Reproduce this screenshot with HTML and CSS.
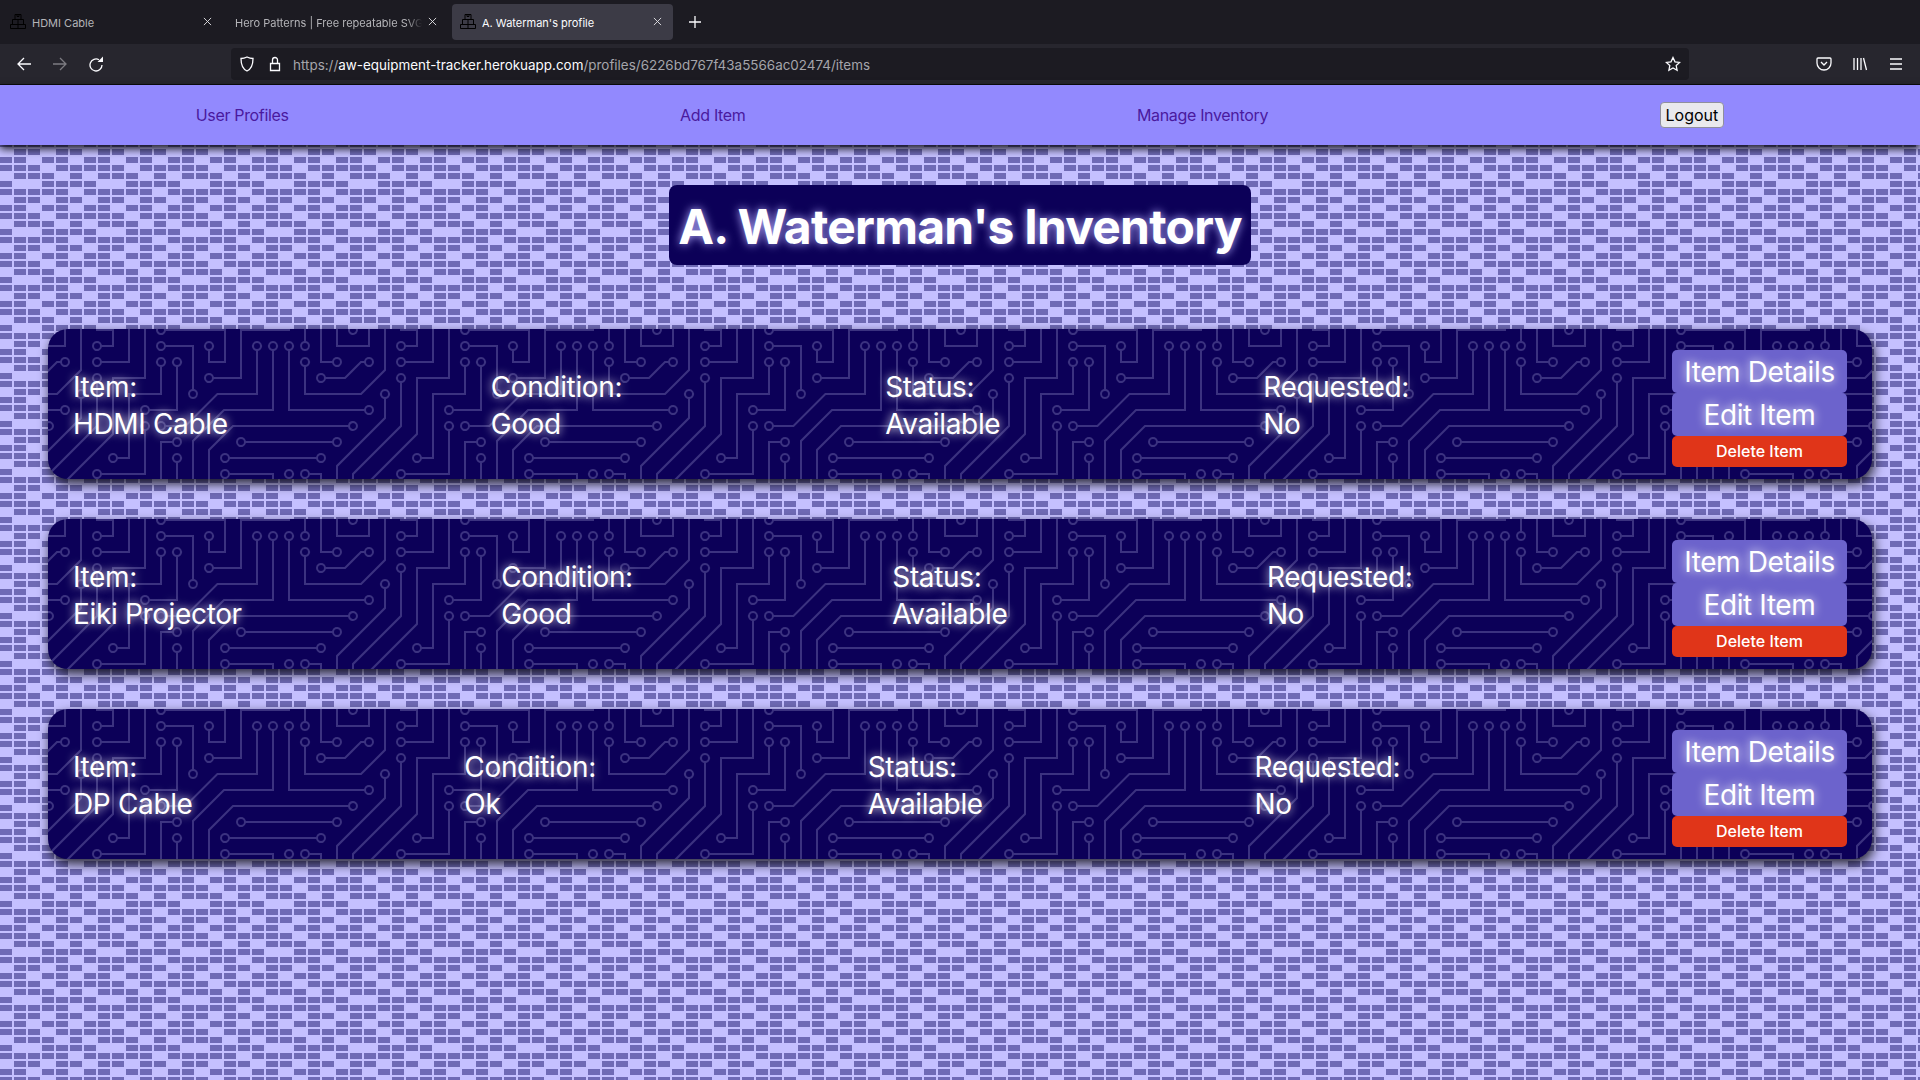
FILE: index.html
```html
<!DOCTYPE html>
<html lang="en">
<head>
    <meta charset="UTF-8">
    <meta name="viewport" content="width=device-width, initial-scale=1.0">
    <title>A. Waterman's profile</title>
    <link rel="stylesheet" href="styles.css">
</head>
<body>
    <!-- browser chrome -->
    <header class="chrome">
        <div class="tabstrip">
            <div class="tab">
                <svg class="favicon" viewBox="0 0 16 16"><path d="M5 .5h6v5H5zM7 .5v2h2v-2M2.500 5.500h11v5h-11zM8 5.500v5M.5 10.500h15v4H.5zM8 10.500v4"/></svg>
                <span class="tab-title">HDMI Cable</span>
                <svg class="tab-close" viewBox="0 0 10 10"><path d="m1 1 8 8M9 1 1 9"/></svg>
            </div>
            <div class="tab">
                <span class="tab-title tab-title-fade">Hero Patterns | Free repeatable SVG</span>
                <svg class="tab-close" viewBox="0 0 10 10"><path d="m1 1 8 8M9 1 1 9"/></svg>
            </div>
            <div class="tab tab-active">
                <svg class="favicon" viewBox="0 0 16 16"><path d="M5 .5h6v5H5zM7 .5v2h2v-2M2.500 5.500h11v5h-11zM8 5.500v5M.5 10.500h15v4H.5zM8 10.500v4"/></svg>
                <span class="tab-title">A. Waterman's profile</span>
                <svg class="tab-close" viewBox="0 0 10 10"><path d="m1 1 8 8M9 1 1 9"/></svg>
            </div>
            <svg class="icon newtab" viewBox="0 0 16 16"><path d="M8 2v12M2 8h12"/></svg>
        </div>
        <div class="toolbar">
            <svg class="icon" viewBox="0 0 16 16"><path d="M15 8H2M8 2 2 8l6 6"/></svg>
            <svg class="icon icon-off" viewBox="0 0 16 16"><path d="M1 8h13M8 2l6 6-6 6"/></svg>
            <svg class="icon" viewBox="0 0 16 16"><path d="M14 9a6 6 0 1 1-3-5.200"/><path class="icon-solid" d="M9.500 6H15V.5z"/></svg>
            <div class="urlbar">
                <svg class="icon" viewBox="0 0 16 16"><path d="M8 1c2 1 4 1.500 6 1.500 0 6-1.500 10.500-6 12.500-4.500-2-6-6.500-6-12.500C4 2.500 6 2 8 1z"/></svg>
                <svg class="icon" viewBox="0 0 16 16"><path d="M3.500 7.500h9v7h-9zM5.500 7.500V4a2.500 2.500 0 0 1 5 0v3.500"/></svg>
                <div class="url"><span class="url-dim">https://</span>aw-equipment-tracker.herokuapp.com<span class="url-dim">/profiles/6226bd767f43a5566ac02474/items</span></div>
                <svg class="icon" viewBox="0 0 16 16"><path d="m8 1.500 2 4.300 4.700.6-3.500 3.200.9 4.700L8 12l-4.100 2.300.9-4.700L1.300 6.400 6 5.800z"/></svg>
            </div>
            <div class="toolbar-right">
                <svg class="icon" viewBox="0 0 16 16"><path d="M2 2h12c.6 0 1 .4 1 1v4a7 7 0 0 1-14 0V3c0-.6.4-1 1-1zM5 6l3 3 3-3"/></svg>
                <svg class="icon" viewBox="0 0 16 16"><path d="M2 2v12M5.500 2v12M9 2v12M11.500 2l3 12"/></svg>
                <svg class="icon" viewBox="0 0 16 16"><path d="M2 3h12M2 8h12M2 13h12"/></svg>
            </div>
        </div>
    </header>

    <nav class="navbar">
        <a href="#">User Profiles</a>
        <a href="#">Add Item</a>
        <a href="#">Manage Inventory</a>
        <button class="logout">Logout</button>
    </nav>

    <main class="page">
        <h1 class="title">A. Waterman's Inventory</h1>

        <section class="card">
            <div class="field">Item:<br>HDMI Cable</div>
            <div class="field">Condition:<br>Good</div>
            <div class="field">Status:<br>Available</div>
            <div class="field">Requested:<br>No</div>
            <div class="actions">
                <button class="btn">Item Details</button>
                <button class="btn">Edit Item</button>
                <button class="btn btn-delete">Delete Item</button>
            </div>
        </section>

        <section class="card">
            <div class="field">Item:<br>Eiki Projector</div>
            <div class="field">Condition:<br>Good</div>
            <div class="field">Status:<br>Available</div>
            <div class="field">Requested:<br>No</div>
            <div class="actions">
                <button class="btn">Item Details</button>
                <button class="btn">Edit Item</button>
                <button class="btn btn-delete">Delete Item</button>
            </div>
        </section>

        <section class="card">
            <div class="field">Item:<br>DP Cable</div>
            <div class="field">Condition:<br>Ok</div>
            <div class="field">Status:<br>Available</div>
            <div class="field">Requested:<br>No</div>
            <div class="actions">
                <button class="btn">Item Details</button>
                <button class="btn">Edit Item</button>
                <button class="btn btn-delete">Delete Item</button>
            </div>
        </section>
    </main>
</body>
</html>
```
FILE: styles.css
```css
* {
    box-sizing: border-box;
}

body {
    margin: 0;
    height: 1080px;
    overflow: hidden;
    display: flex;
    flex-direction: column;
    font-family: Inter, "Liberation Sans", sans-serif;
}

/* browser chrome */
.chrome {
    height: 85px;
    flex: none;
    background-color: #27262e;
    border-bottom: 1px solid #0c0c0d;
    color: #fbfbfe;
}

.tabstrip {
    height: 44px;
    padding: 4px 0 4px 2px;
    display: flex;
    align-items: stretch;
    gap: 4px;
    background-color: #1c1b22;
}

.tab {
    width: 221px;
    padding: 0 11px 0 8px;
    display: flex;
    align-items: center;
    gap: 6px;
    border-radius: 4px;
    font-size: 11px;
    color: #b4b4b8;
}

.tab-active {
    background-color: #3c3b46;
    color: #fbfbfe;
}

.favicon {
    width: 16px;
    height: 16px;
    flex: none;
    fill: none;
    stroke: #000;
    stroke-width: 1;
}

.tab-title {
    flex: 1;
    padding-top: 2px;
    overflow: hidden;
    white-space: nowrap;
}

.tab-title-fade {
    -webkit-mask-image: linear-gradient(to right, #000 92%, transparent);
    mask-image: linear-gradient(to right, #000 92%, transparent);
}

.tab-close {
    width: 9px;
    height: 9px;
    flex: none;
    margin-top: -2px;
    fill: none;
    stroke: #e4e4e8;
    stroke-width: 1;
}

.icon {
    width: 16px;
    height: 16px;
    flex: none;
    fill: none;
    stroke: #fbfbfe;
    stroke-width: 1.3;
}

.icon-solid {
    fill: #fbfbfe;
    stroke: none;
}

.icon-off {
    opacity: .4;
}

.newtab {
    align-self: center;
    margin-left: 10px;
}

.toolbar {
    height: 40px;
    padding: 0 16px;
    display: flex;
    align-items: center;
    gap: 20px;
}

.urlbar {
    width: 1458px;
    height: 32px;
    margin-left: 107px;
    padding: 0 8px 0 8px;
    display: flex;
    align-items: center;
    gap: 12px;
    border-radius: 4px;
    background-color: #1c1b22;
}

.url {
    flex: 1;
    margin-left: -2px;
    padding-top: 2px;
    font-size: 13.45px;
    white-space: nowrap;
}

.url-dim {
    color: #a5a5ab;
}

.toolbar-right {
    margin-left: 107px;
    display: flex;
    gap: 20px;
}

/* site nav */
.navbar {
    height: 60px;
    flex: none;
    position: relative;
    z-index: 1;
    display: flex;
    justify-content: space-around;
    align-items: center;
    background-color: #9289fe;
    box-shadow: 0 4px 8px rgba(0, 0, 0, .85);
}

.navbar a {
    font-size: 16px;
    letter-spacing: -.33px;
    color: #4a1a9e;
    text-decoration: none;
}

.logout {
    height: 26px;
    padding: 0 5px;
    border: 1px solid #8f8f9d;
    border-radius: 4px;
    background-color: #e9e9ed;
    color: #000;
    font-family: inherit;
    font-size: 16px;
}

/* page */
.page {
    flex: 1;
    padding: 40px 48px 0;
    display: flex;
    flex-direction: column;
    align-items: center;
    background-color: #c5c0ff;
    background-position: 0 12px;
    background-image: url("data:image/svg+xml,%3Csvg xmlns='http://www.w3.org/2000/svg' width='84' height='48'%3E%3Cpath fill='%236f6ab5' d='M0 0h12v6H0zM14 0h12v6H14zM42 0h12v6H42zM56 0h12v6H56zM0 8h12v6H0zM14 8h12v6H14zM28 8h12v6H28zM56 8h12v6H56zM70 8h12v6H70zM14 16h12v6H14zM28 16h12v6H28zM42 16h12v6H42zM70 16h12v6H70zM0 24h12v6H0zM42 24h12v6H42zM56 24h12v6H56zM70 24h12v6H70zM0 32h12v6H0zM14 32h12v6H14zM28 32h12v6H28zM42 32h12v6H42zM56 32h12v6H56zM14 40h12v6H14zM28 40h12v6H28zM56 40h12v6H56zM70 40h12v6H70z'/%3E%3C/svg%3E");
}

.title {
    height: 80px;
    margin: 0 0 64px;
    padding: 0 9px;
    border-radius: 8px;
    background-color: #0c0058;
    color: #fff;
    font-size: 48px;
    font-weight: 700;
    letter-spacing: -.78px;
    line-height: 83px;
    white-space: nowrap;
    text-shadow: 0 0 10px #b5aeff;
}

.card {
    width: 100%;
    height: 150px;
    flex: none;
    margin-bottom: 40px;
    padding: 21px 25px 13px 25px;
    display: flex;
    justify-content: space-between;
    align-items: center;
    border-radius: 20px;
    box-shadow: 2px 5px 12px rgba(0, 0, 0, .8);
    background-color: #0c0058;
    background-image: url("data:image/svg+xml,%3Csvg xmlns='http://www.w3.org/2000/svg' width='304' height='304'%3E%3Cpath fill='%233b3280' fill-rule='evenodd' d='M44.1 224a5 5 0 1 1 0 2H0v-2h44.1zm160 48a5 5 0 1 1 0 2H82v-2h122.1zm57.8-46a5 5 0 1 1 0-2H304v2h-42.1zm0 16a5 5 0 1 1 0-2H304v2h-42.1zm6.2-114a5 5 0 1 1 0 2h-86.2a5 5 0 1 1 0-2h86.2zm-256-48a5 5 0 1 1 0 2H0v-2h12.1zm185.8 34a5 5 0 1 1 0-2h86.2a5 5 0 1 1 0 2h-86.2zM258 12.1a5 5 0 1 1-2 0V0h2v12.1zm-64 208a5 5 0 1 1-2 0v-54.2a5 5 0 1 1 2 0v54.2zm48-198.2V80h62v2h-64V21.9a5 5 0 1 1 2 0zm16 16V64h46v2h-48V37.9a5 5 0 1 1 2 0zm-128 96V208h16v12.1a5 5 0 1 1-2 0V210h-16v-76.1a5 5 0 1 1 2 0zm-5.9-21.9a5 5 0 1 1 0 2H114v48H85.9a5 5 0 1 1 0-2H112v-48h12.1zm-6.2 130a5 5 0 1 1 0-2H176v-74.1a5 5 0 1 1 2 0V242h-60.1zm-16-64a5 5 0 1 1 0-2H114v48h10.1a5 5 0 1 1 0 2H112v-48h-10.1zM66 284.1a5 5 0 1 1-2 0V274H50v30h-2v-32h18v12.1zM236.1 176a5 5 0 1 1 0 2H226v94h48v32h-2v-30h-48v-98h12.1zm25.8-30a5 5 0 1 1 0-2H274v44.1a5 5 0 1 1-2 0V146h-10.1zm-64 96a5 5 0 1 1 0-2H208v-80h16v-14h-42.1a5 5 0 1 1 0-2H226v18h-16v80h-12.1zm86.2-210a5 5 0 1 1 0 2H272V0h2v32h10.1zM98 101.9V146H53.9a5 5 0 1 1 0-2H96v-42.1a5 5 0 1 1 2 0zM53.9 34a5 5 0 1 1 0-2H80V0h2v34H53.9zm60.1 3.9V66H82v64H69.9a5 5 0 1 1 0-2H80V64h32V37.9a5 5 0 1 1 2 0zM101.9 82a5 5 0 1 1 0-2H128V37.9a5 5 0 1 1 2 0V82h-28.1zm16-64a5 5 0 1 1 0-2H146v44.1a5 5 0 1 1-2 0V18h-26.1zm102.2 270a5 5 0 1 1 0 2H98v14h-2v-16h124.1zM242 149.9V160h16v34h-16v62h48v48h-2v-46h-48v-66h16v-30h-16v-12.1a5 5 0 1 1 2 0zM53.9 18a5 5 0 1 1 0-2H64V2H48V0h18v18H53.9zm112 32a5 5 0 1 1 0-2H192V0h50v2h-48v48h-28.1zm-48-48a5 5 0 0 1-9.8-2h2.07a3 3 0 1 0 5.66 0H178v34h-18V21.9a5 5 0 1 1 2 0V32h14V2h-58.1zm0 96a5 5 0 1 1 0-2H137l32-32h39V21.9a5 5 0 1 1 2 0V66h-40.17l-32 32H117.9zm28.1 90.1a5 5 0 1 1-2 0v-76.51L175.59 80H224V21.9a5 5 0 1 1 2 0V82h-49.59L146 112.41v75.69zm16 32a5 5 0 1 1-2 0v-99.51L184.59 96H300.1a5 5 0 0 1 3.9-3.9v2.07a3 3 0 0 0 0 5.66v2.07a5 5 0 0 1-3.9-3.9H185.41L162 121.41v98.69zm-144-64a5 5 0 1 1-2 0v-3.51l48-48V48h32V0h2v50H66v55.41l-48 48v2.69zM50 53.9v43.51l-48 48V208h26.1a5 5 0 1 1 0 2H0v-65.41l48-48V53.9a5 5 0 1 1 2 0zm-16 16V89.41l-34 34v-2.82l32-32V69.9a5 5 0 1 1 2 0zM12.1 32a5 5 0 1 1 0 2H9.41L0 43.41V40.6L8.59 32h3.51zm265.8 18a5 5 0 1 1 0-2h18.69l7.41-7.41v2.82L297.41 50H277.9zm-16 160a5 5 0 1 1 0-2H288v-71.41l16-16v2.82l-14 14V210h-28.1zm-208 32a5 5 0 1 1 0-2H64v-22.59L40.59 194H21.9a5 5 0 1 1 0-2H41.41L66 216.59V242H53.9zm150.2 14a5 5 0 1 1 0 2H96v-56.6L56.6 162H37.9a5 5 0 1 1 0-2h19.5L98 200.6V256h106.1zm-150.2 2a5 5 0 1 1 0-2H80v-46.59L48.59 178H21.9a5 5 0 1 1 0-2H49.41L82 208.59V258H53.9zM34 39.8v1.61L9.41 66H0v-2h8.59L32 40.59V0h2v39.8zM2 300.1a5 5 0 0 1 3.9 3.9H3.83A3 3 0 0 0 0 302.17V256h18v48h-2v-46H2v42.1zM34 241v63h-2v-62H0v-2h34v1zM17 18H0v-2h16V0h2v18h-1zm273-2h14v2h-16V0h2v16zm-32 273v15h-2v-14h-14v14h-2v-16h18v1zM0 92.1A5.02 5.02 0 0 1 6 97a5 5 0 0 1-6 4.9v-2.07a3 3 0 1 0 0-5.66V92.1zM80 272h2v32h-2v-32zm37.9 32h-2.07a3 3 0 0 0-5.66 0h-2.07a5 5 0 0 1 9.8 0zM5.9 0A5.02 5.02 0 0 1 0 5.9V3.83A3 3 0 0 0 3.83 0H5.9zm294.2 0h2.07A3 3 0 0 0 304 3.83V5.9a5 5 0 0 1-3.9-5.9zm3.9 300.1v2.07a3 3 0 0 0-1.83 1.83h-2.07a5 5 0 0 1 3.9-3.9zM52 225a3 3 0 1 0-6 0 3 3 0 1 0 6 0zM212 273a3 3 0 1 0-6 0 3 3 0 1 0 6 0zM260 225a3 3 0 1 0-6 0 3 3 0 1 0 6 0zM260 241a3 3 0 1 0-6 0 3 3 0 1 0 6 0zM276 129a3 3 0 1 0-6 0 3 3 0 1 0 6 0zM180 129a3 3 0 1 0-6 0 3 3 0 1 0 6 0zM20 81a3 3 0 1 0-6 0 3 3 0 1 0 6 0zM196 113a3 3 0 1 0-6 0 3 3 0 1 0 6 0zM292 113a3 3 0 1 0-6 0 3 3 0 1 0 6 0zM260 17a3 3 0 1 0-6 0 3 3 0 1 0 6 0zM196 225a3 3 0 1 0-6 0 3 3 0 1 0 6 0zM196 161a3 3 0 1 0-6 0 3 3 0 1 0 6 0zM244 17a3 3 0 1 0-6 0 3 3 0 1 0 6 0zM260 33a3 3 0 1 0-6 0 3 3 0 1 0 6 0zM148 225a3 3 0 1 0-6 0 3 3 0 1 0 6 0zM132 129a3 3 0 1 0-6 0 3 3 0 1 0 6 0zM132 113a3 3 0 1 0-6 0 3 3 0 1 0 6 0zM84 161a3 3 0 1 0-6 0 3 3 0 1 0 6 0zM116 241a3 3 0 1 0-6 0 3 3 0 1 0 6 0zM180 161a3 3 0 1 0-6 0 3 3 0 1 0 6 0zM100 177a3 3 0 1 0-6 0 3 3 0 1 0 6 0zM132 225a3 3 0 1 0-6 0 3 3 0 1 0 6 0zM68 289a3 3 0 1 0-6 0 3 3 0 1 0 6 0zM244 177a3 3 0 1 0-6 0 3 3 0 1 0 6 0zM260 145a3 3 0 1 0-6 0 3 3 0 1 0 6 0zM276 193a3 3 0 1 0-6 0 3 3 0 1 0 6 0zM196 241a3 3 0 1 0-6 0 3 3 0 1 0 6 0zM180 145a3 3 0 1 0-6 0 3 3 0 1 0 6 0zM292 33a3 3 0 1 0-6 0 3 3 0 1 0 6 0zM52 145a3 3 0 1 0-6 0 3 3 0 1 0 6 0zM100 97a3 3 0 1 0-6 0 3 3 0 1 0 6 0zM52 33a3 3 0 1 0-6 0 3 3 0 1 0 6 0zM68 129a3 3 0 1 0-6 0 3 3 0 1 0 6 0zM116 33a3 3 0 1 0-6 0 3 3 0 1 0 6 0zM100 81a3 3 0 1 0-6 0 3 3 0 1 0 6 0zM132 33a3 3 0 1 0-6 0 3 3 0 1 0 6 0zM116 17a3 3 0 1 0-6 0 3 3 0 1 0 6 0zM148 65a3 3 0 1 0-6 0 3 3 0 1 0 6 0zM228 289a3 3 0 1 0-6 0 3 3 0 1 0 6 0zM244 145a3 3 0 1 0-6 0 3 3 0 1 0 6 0zM52 17a3 3 0 1 0-6 0 3 3 0 1 0 6 0zM164 49a3 3 0 1 0-6 0 3 3 0 1 0 6 0zM164 17a3 3 0 1 0-6 0 3 3 0 1 0 6 0zM116 97a3 3 0 1 0-6 0 3 3 0 1 0 6 0zM212 17a3 3 0 1 0-6 0 3 3 0 1 0 6 0zM148 193a3 3 0 1 0-6 0 3 3 0 1 0 6 0zM228 17a3 3 0 1 0-6 0 3 3 0 1 0 6 0zM164 225a3 3 0 1 0-6 0 3 3 0 1 0 6 0zM20 161a3 3 0 1 0-6 0 3 3 0 1 0 6 0zM52 49a3 3 0 1 0-6 0 3 3 0 1 0 6 0zM36 209a3 3 0 1 0-6 0 3 3 0 1 0 6 0zM36 65a3 3 0 1 0-6 0 3 3 0 1 0 6 0zM20 33a3 3 0 1 0-6 0 3 3 0 1 0 6 0zM276 49a3 3 0 1 0-6 0 3 3 0 1 0 6 0zM260 209a3 3 0 1 0-6 0 3 3 0 1 0 6 0zM52 241a3 3 0 1 0-6 0 3 3 0 1 0 6 0zM20 193a3 3 0 1 0-6 0 3 3 0 1 0 6 0zM212 257a3 3 0 1 0-6 0 3 3 0 1 0 6 0zM36 161a3 3 0 1 0-6 0 3 3 0 1 0 6 0zM52 257a3 3 0 1 0-6 0 3 3 0 1 0 6 0zM20 177a3 3 0 1 0-6 0 3 3 0 1 0 6 0z'/%3E%3C/svg%3E");
}

.field {
    margin-bottom: 5px;
    color: #fff;
    font-size: 28px;
    letter-spacing: -.35px;
    line-height: 37px;
    text-shadow: 0 0 10px #fff;
}

.actions {
    width: 175px;
    display: flex;
    flex-direction: column;
}

.btn {
    height: 43px;
    padding: 2px 0 0;
    border: none;
    border-radius: 5px;
    background-color: #6c63cc;
    color: #fff;
    font-family: inherit;
    font-size: 28px;
    letter-spacing: -.4px;
    text-shadow: 0 0 10px #fff;
}

.btn-delete {
    height: 31px;
    padding: 0;
    background-color: #e03519;
    font-size: 16px;
    font-weight: 500;
    letter-spacing: 0;
    text-shadow: none;
}
```
